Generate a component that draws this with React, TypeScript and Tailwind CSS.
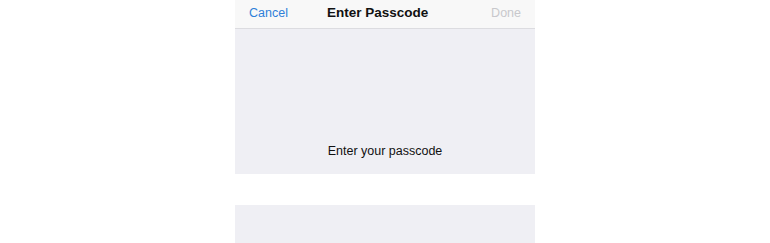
export default function App() {
  return (
    <div className="flex h-[243px] w-[770px] justify-center bg-white font-['Liberation_Sans',Arial,sans-serif]">
      <div className="flex w-[300px] flex-col">
        {/* nav bar */}
        <div className="flex h-[29px] items-center border-b border-[#dcdce0] bg-[#f8f8f8] px-[14px] pb-[2px] text-[12.5px]">
          <span className="text-[#2f80d8]">Cancel</span>
          <span className="ml-[39px] text-[13.5px] font-bold text-[#111]">Enter Passcode</span>
          <span className="ml-auto text-[#c8c8cc]">Done</span>
        </div>
        {/* passcode area */}
        <div className="flex h-[145px] items-end justify-center bg-[#efeff4] pb-[13px] text-[12.5px] text-[#111]">
          Enter your passcode
        </div>
        <div className="h-[31px] bg-white" />
        <div className="flex-1 bg-[#efeff4]" />
      </div>
    </div>
  )
}
